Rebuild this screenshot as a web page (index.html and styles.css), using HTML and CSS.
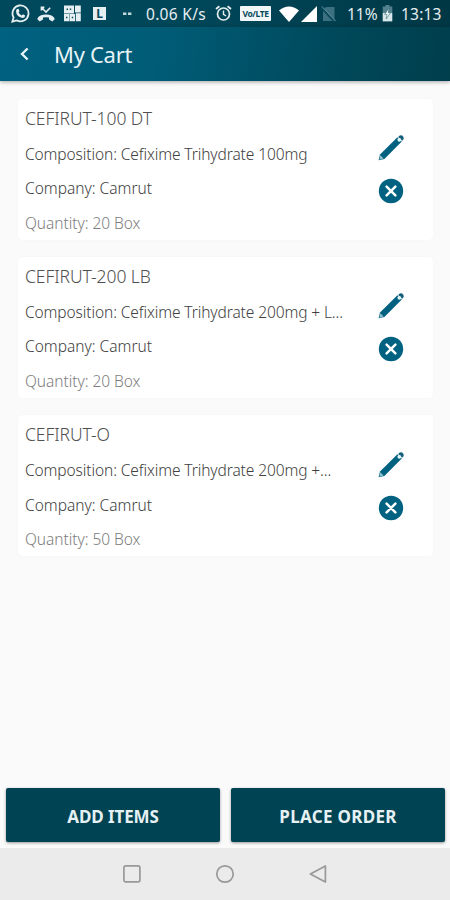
FILE: index.html
```html
<!DOCTYPE html>
<html lang="en">
<head>
    <meta charset="UTF-8">
    <meta name="viewport" content="width=device-width, initial-scale=1.0">
    <title>My Cart</title>
    <link rel="stylesheet" href="styles.css">
</head>
<body>
    <svg class="sprite" aria-hidden="true">
        <symbol id="pencil" viewBox="0 0 28 28">
            <path d="M1.6 26.2 L3 20.6 L20.4 3.2 L24.8 7.6 L7.4 25 Z" fill="#006181"/>
            <path d="M21.2 2.9 L22.3 1.8 Q23.7 .6 25.2 1.6 L26.3 2.7 Q27.3 4.2 26.2 5.7 L25.1 6.8 Z" fill="#145f7c"/>
            <path d="M3.3 21.3 L6.6 24.6 L2.4 25.8 Z" fill="#8fbfcb"/>
            <circle cx="22.3" cy="5.8" r="1.9" fill="#e4f5f8"/>
        </symbol>
        <symbol id="remove" viewBox="0 0 26 26">
            <circle cx="13" cy="13" r="12.2" fill="#006181"/>
            <path d="M8.6 8.6 L17.4 17.4 M17.4 8.6 L8.6 17.4" stroke="#fff" stroke-width="2.5" stroke-linecap="round"/>
        </symbol>
    </svg>

    <div class="statusbar">
        <svg class="st-whatsapp" viewBox="0 0 19 19" fill="none">
            <path d="M1.4 17.6 L2.6 13.4 A8 8 0 1 1 5.7 16.4 Z" stroke="#e5eef1" stroke-width="1.8"/>
            <path d="M6.1 5 L7.5 4.8 L8.5 7.3 L7.6 8.5 Q8.7 10.5 10.8 11.4 L12 10.3 L14.2 11.5 Q14 14 11.5 14 Q5.2 12.7 5 7 Q5.2 5.6 6.1 5 Z" fill="#e5eef1"/>
        </svg>
        <svg class="st-missed" viewBox="0 0 18 16" fill="none">
            <path d="M4.4 4.6 V1.4 H7.4 M4.8 1.8 L9 6 L13.2 1.8" stroke="#e5eef1" stroke-width="1.6"/>
            <path d="M.2 13 Q2 9.4 6 8.8 Q9 8.2 12 8.8 Q16 9.4 17.8 13 L15.4 15.6 L12 13.6 V11.6 Q9 10.8 6 11.6 V13.6 L2.6 15.6 Z" fill="#e5eef1"/>
        </svg>
        <svg class="st-grid" viewBox="0 0 17 17">
            <path d="M0 .6 H10 V8.4 H0 Z M11 .6 H16.8 V7.4 H11 Z M0 9 H5.6 V16.2 H0 Z M6 9 H11 V16.2 H6 Z M11.8 8.2 H16.8 V16.2 H11.8 Z" fill="#e5eef1"/>
            <path d="M2.6 3.5 H4 V5 H2.6 Z M5.8 3.5 H7.2 V5 H5.8 Z M2 11.8 H3.4 V13.2 H2 Z M7.8 11.8 H9.2 V13.2 H7.8 Z" fill="#074a5c"/>
        </svg>
        <span class="st-l">L</span>
        <svg class="st-dots" viewBox="0 0 9 4"><path d="M0 .5 H3.4 V3 H0 Z M5 .5 H8.4 V3 H5 Z" fill="#c3d7dd"/></svg>
        <span class="st-speed">0.06 K/s</span>
        <svg class="st-alarm" viewBox="0 0 17 17" fill="none" stroke="#e5eef1">
            <circle cx="8.5" cy="9" r="6" stroke-width="1.7"/>
            <path d="M8.5 5.5 V9.3 L11 11" stroke-width="1.4"/>
            <path d="M1 4 L4.4 1.2 M16 4 L12.6 1.2" stroke-width="1.8"/>
        </svg>
        <span class="st-volte">Vo/LTE</span>
        <svg class="st-wifi" viewBox="0 0 20 16"><path d="M0 4.4 Q10 -3.2 20 4.4 L10 16 Z" fill="#fff"/></svg>
        <svg class="st-signal" viewBox="0 0 16 16"><path d="M16 0 V16 H0 Z" fill="#fff"/></svg>
        <svg class="st-nosim" viewBox="0 0 15 16">
            <path d="M5 1 H13.5 V15 H2 V4 Z" fill="#3c7080"/>
            <path d="M0 1 L14 16" stroke="#07495a" stroke-width="2.4"/>
            <path d="M1 .5 L14.5 15" stroke="#6b929d" stroke-width="1"/>
        </svg>
        <span class="st-percent">11%</span>
        <svg class="st-battery" viewBox="0 0 11 17">
            <path d="M3.5 0 H7.5 V1.6 H10.3 V8 H.7 V1.6 H3.5 Z" fill="#52808d"/>
            <path d="M.7 8 H10.3 V16.4 H.7 Z" fill="#d6e6ea"/>
            <path d="M7 3 L2.7 9.4 H5 L4.2 14 L8.5 7.8 H6.2 Z" fill="#f5fbfc" stroke="#396c7b" stroke-width=".6"/>
        </svg>
        <span class="st-time">13:13</span>
    </div>

    <header class="appbar">
        <svg class="back" viewBox="0 0 10 14"><path d="M7.6 1.5 L2 7 L7.6 12.5" fill="none" stroke="#e6f3f6" stroke-width="2.4"/></svg>
        <h1>My Cart</h1>
    </header>

    <main class="cart">
        <div class="card">
            <div class="info">
                <h2>CEFIRUT-100 DT</h2>
                <p>Composition: Cefixime Trihydrate 100mg</p>
                <p class="company">Company: Camrut</p>
                <p class="quantity">Quantity: 20 Box</p>
            </div>
            <div class="actions">
                <svg class="edit"><use href="#pencil"/></svg>
                <svg class="delete"><use href="#remove"/></svg>
            </div>
        </div>
        <div class="card">
            <div class="info">
                <h2>CEFIRUT-200 LB</h2>
                <p>Composition: Cefixime Trihydrate 200mg + L...</p>
                <p class="company">Company: Camrut</p>
                <p class="quantity">Quantity: 20 Box</p>
            </div>
            <div class="actions">
                <svg class="edit"><use href="#pencil"/></svg>
                <svg class="delete"><use href="#remove"/></svg>
            </div>
        </div>
        <div class="card">
            <div class="info">
                <h2>CEFIRUT-O</h2>
                <p>Composition: Cefixime Trihydrate 200mg +...</p>
                <p class="company">Company: Camrut</p>
                <p class="quantity">Quantity: 50 Box</p>
            </div>
            <div class="actions">
                <svg class="edit"><use href="#pencil"/></svg>
                <svg class="delete"><use href="#remove"/></svg>
            </div>
        </div>
    </main>

    <div class="buttons">
        <button>ADD ITEMS</button>
        <button class="order">PLACE ORDER</button>
    </div>

    <nav class="navbar">
        <svg viewBox="0 0 20 20"><rect x="1.9" y="1.9" width="16" height="16" rx="1.8"/></svg>
        <svg viewBox="0 0 20 20"><circle cx="10" cy="10" r="8.2"/></svg>
        <svg viewBox="0 0 20 20"><path d="M17.4 2 V18 L2.4 10 Z"/></svg>
    </nav>
</body>
</html>
```
FILE: styles.css
```css
* {
    box-sizing: border-box;
}
body {
    margin: 0;
    height: 900px;
    display: flex;
    flex-direction: column;
    background: #fafafa;
    font-family: "Noto Sans", "Open Sans", sans-serif;
    overflow: hidden;
}
svg {
    display: block;
    flex: none;
}
.sprite {
    width: 0;
    height: 0;
    position: absolute;
}

/* status bar */
.statusbar {
    height: 27px;
    flex: none;
    display: flex;
    align-items: center;
    padding-left: 11px;
    background: linear-gradient(90deg, #00495d, #004658 50%, #003744);
    color: #e5eef1;
    font-size: 15.5px;
    line-height: 28px;
    white-space: nowrap;
}
.statusbar span {
    flex: none;
}
.st-whatsapp {
    width: 19px;
    height: 19px;
}
.st-missed {
    width: 18px;
    height: 16px;
    margin-left: 7px;
}
.st-grid {
    width: 17px;
    height: 17px;
    margin-left: 9px;
}
.st-l {
    width: 13px;
    height: 13px;
    margin-left: 12px;
    background: #e5eef1;
    color: #07495a;
    font-size: 12px;
    font-weight: 700;
    line-height: 13px;
    text-align: center;
}
.st-dots {
    width: 9px;
    height: 4px;
    margin-left: 17px;
}
.st-speed {
    width: 62px;
    margin-left: 14px;
    letter-spacing: 0.3px;
}
.st-alarm {
    width: 17px;
    height: 17px;
    margin-left: 7px;
}
.st-volte {
    width: 31px;
    height: 15px;
    margin-left: 8px;
    border-radius: 1px;
    background: #f2f8f9;
    color: #07495a;
    font-size: 8.5px;
    font-weight: 700;
    line-height: 15px;
    text-align: center;
    letter-spacing: -0.4px;
}
.st-wifi {
    width: 20px;
    height: 16px;
    margin-left: 8px;
}
.st-signal {
    width: 16px;
    height: 16px;
    margin-left: 2px;
}
.st-nosim {
    width: 15px;
    height: 16px;
    margin-left: 4px;
}
.st-percent {
    width: 32px;
    margin-left: 11px;
}
.st-battery {
    width: 11px;
    height: 17px;
    margin-left: 3px;
}
.st-time {
    margin-left: 8px;
    letter-spacing: 0.2px;
}

/* app bar */
.appbar {
    height: 54px;
    flex: none;
    display: flex;
    align-items: center;
    padding-left: 20px;
    background: linear-gradient(100deg, #006180, #005c77 35%, #00485a 75%, #003e4c);
    box-shadow: 0 1px 4px rgba(0, 0, 0, 0.35);
}
.back {
    width: 10px;
    height: 14px;
}
.appbar h1 {
    margin: 0 0 0 24px;
    color: #e6f3f6;
    font-size: 22px;
    font-weight: 400;
    line-height: 54px;
    letter-spacing: -0.3px;
}

/* cart list */
.cart {
    flex: 1;
    display: flex;
    flex-direction: column;
    gap: 17.3px;
    padding: 17.6px 17px 0 18px;
}
.card {
    height: 141px;
    flex: none;
    display: flex;
    justify-content: space-between;
    padding: 0 28px 0 7px;
    border-radius: 4px;
    background: #fff;
    box-shadow: 0 0 1px rgba(0, 0, 0, 0.08);
}
.info {
    padding-top: 1px;
    white-space: nowrap;
}
.info h2 {
    margin: 0;
    color: #505050;
    font-size: 17.5px;
    font-weight: 300;
    line-height: 37px;
    letter-spacing: -0.08px;
}
.info p {
    margin: 0;
    color: #404040;
    font-size: 15.5px;
    font-weight: 300;
    line-height: 34.6px;
    letter-spacing: -0.1px;
}
.info .company {
    letter-spacing: 0;
}
.info .quantity {
    color: #7d7d7d;
    letter-spacing: -0.05px;
}
.actions {
    width: 28px;
    display: flex;
    flex-direction: column;
    align-items: center;
    padding-top: 35.4px;
}
.edit {
    width: 28px;
    height: 28px;
}
.delete {
    width: 26px;
    height: 26px;
    margin-top: 16px;
}

/* bottom buttons */
.buttons {
    height: 60px;
    flex: none;
    display: flex;
    gap: 11px;
    padding: 0 5px 6px 6px;
}
.buttons button {
    flex: 1;
    padding: 2px 0 0;
    border: none;
    border-radius: 2px;
    background: #004352;
    box-shadow: 0 1px 3px rgba(0, 0, 0, 0.4);
    color: #e6f1f4;
    font-family: inherit;
    font-size: 17px;
    font-weight: 700;
    letter-spacing: -0.1px;
}
.buttons .order {
    letter-spacing: 0.3px;
}

/* system navigation */
.navbar {
    height: 52px;
    flex: none;
    display: flex;
    justify-content: center;
    align-items: center;
    gap: 73px;
    background: #ebebeb;
}
.navbar svg {
    width: 20px;
    height: 20px;
    fill: none;
    stroke: #999;
    stroke-width: 1.7;
    stroke-linejoin: round;
}
```
